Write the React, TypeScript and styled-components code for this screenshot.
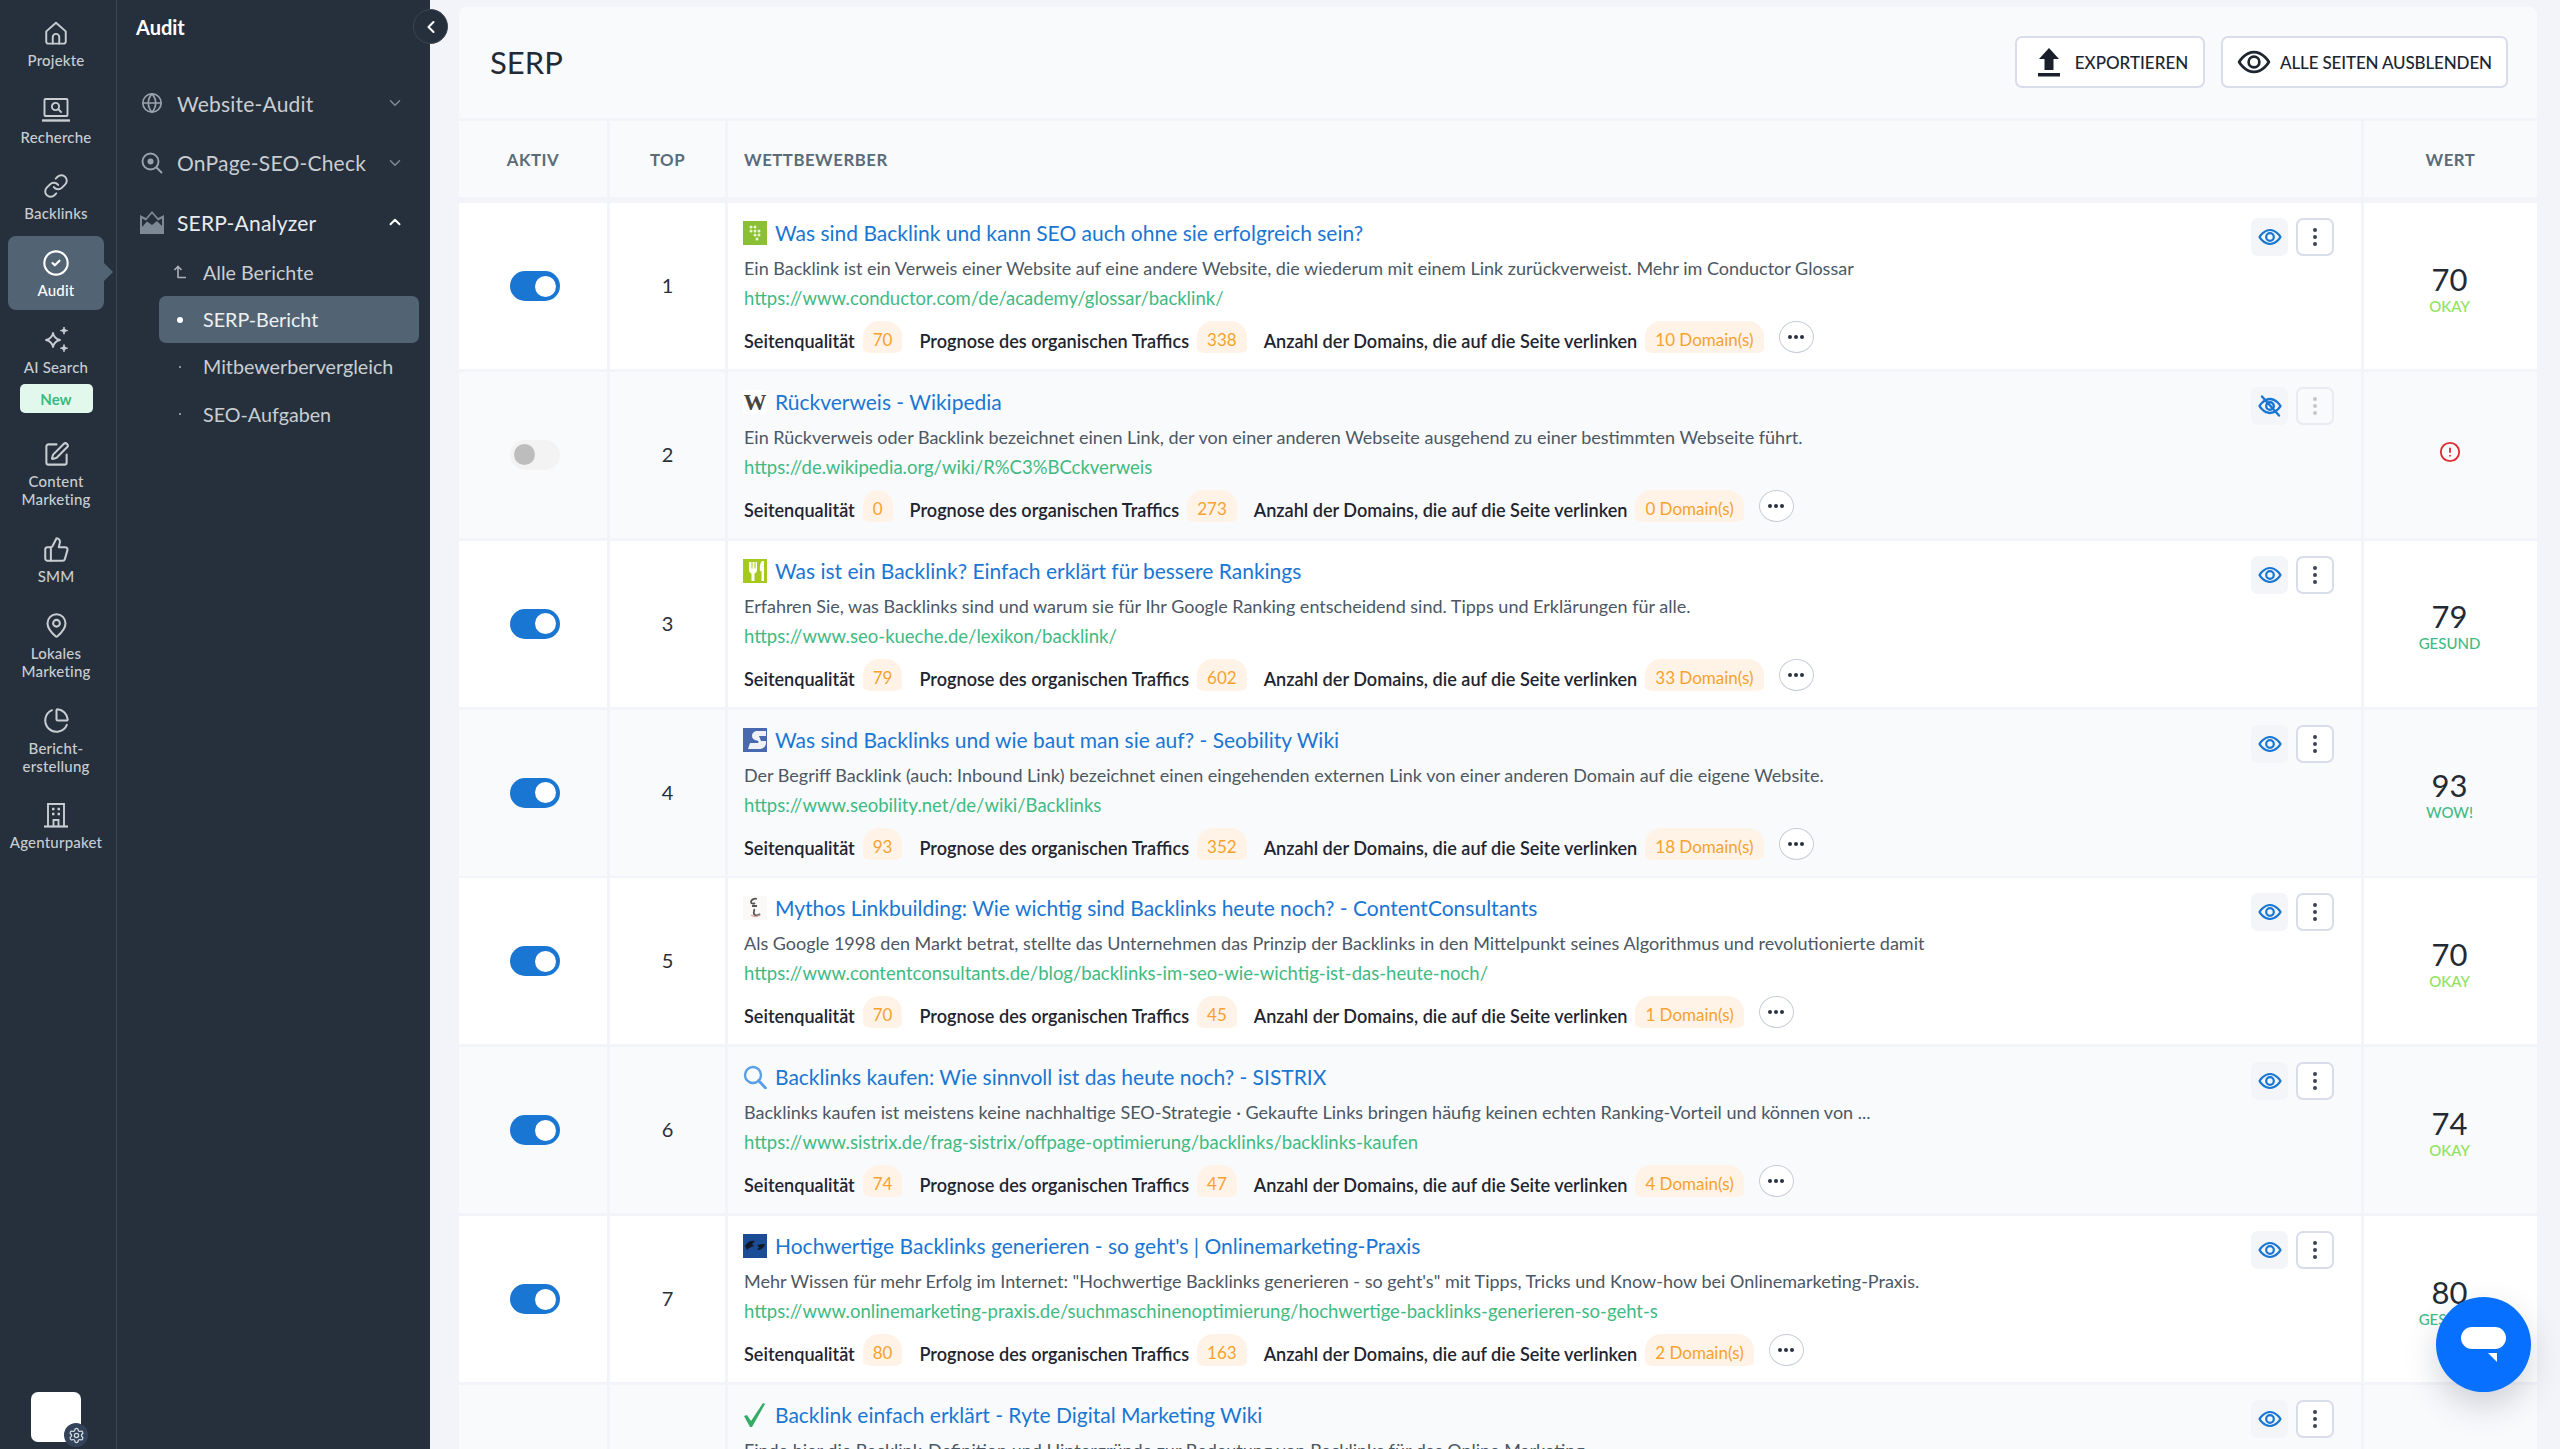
import styled, { createGlobalStyle } from "styled-components";
import {
  ChartPie,
  ChevronDown,
  ChevronLeft,
  ChevronUp,
  CircleAlert,
  CircleCheck,
  Globe,
  Link,
  MapPin,
  Settings,
  SquarePen,
  ThumbsUp,
} from "lucide-react";
import type { ReactNode } from "react";

const GlobalStyle = createGlobalStyle`
  html, body {
    margin: 0;
    height: 100%;
    overflow: hidden;
    font-family: "Lato", "Liberation Sans", sans-serif;
    background: #f3f4f9;
  }
  #root { height: 100%; }
  * { box-sizing: border-box; }
`;

const Page = styled.div`
  display: flex;
  height: 1449px;
  overflow: hidden;
`;

const Rail = styled.nav`
  position: relative;
  width: 117px;
  flex: none;
  display: flex;
  flex-direction: column;
  gap: 2.7px;
  padding-top: 6px;
  background: #25303c;
  border-right: 1px solid #3b4652;
`;

const RailItem = styled.a<{ $active?: boolean }>`
  position: relative;
  width: 96px;
  margin-left: 8px;
  padding: 15px 0 11px;
  display: flex;
  flex-direction: column;
  align-items: center;
  gap: 6px;
  border-radius: 8px;
  color: ${(p) => (p.$active ? "#fff" : "#c9cdd2")};
  background: ${(p) => (p.$active ? "#526473" : "transparent")};
  ${(p) =>
    p.$active &&
    `&::after {
      content: "";
      position: absolute;
      right: -9px;
      top: 27px;
      border-left: 9px solid #526473;
      border-top: 9px solid transparent;
      border-bottom: 9px solid transparent;
    }`}
`;

const RailIcon = styled.span`
  height: 24px;
  display: flex;
  align-items: center;
  justify-content: center;
  svg { display: block; flex: none; }
`;

const RailLabel = styled.span`
  font-size: 15px;
  line-height: 18px;
  font-weight: 500;
  text-align: center;
  white-space: pre-line;
  letter-spacing: 0.2px;
`;

const NewBadge = styled.span`
  width: 73px;
  height: 29px;
  margin: 2px 0 1px;
  border-radius: 5px;
  background: #e3f8ed;
  color: #37bb80;
  font-size: 15px;
  font-weight: 700;
  line-height: 31px;
  text-align: center;
`;

const Tile = styled.div`
  position: absolute;
  left: 31px;
  bottom: 7px;
  width: 50px;
  height: 50px;
  border-radius: 7px;
  background: #fff;
`;

const GearBadge = styled.span`
  position: absolute;
  right: -7px;
  bottom: -5px;
  width: 24px;
  height: 24px;
  border-radius: 50%;
  background: #33435a;
  color: #d7dbe2;
  display: flex;
  align-items: center;
  justify-content: center;
`;

const SubNav = styled.aside`
  position: relative;
  width: 313px;
  flex: none;
  background: #25303c;
  color: #c9cdd2;
  padding: 0 11px 0 19px;
`;

const SubTitle = styled.h2`
  margin: 0;
  height: 54px;
  font-size: 20px;
  line-height: 55px;
  font-weight: 700;
  color: #fff;
`;

const Collapse = styled.button`
  position: absolute;
  top: 9px;
  right: -18px;
  width: 35px;
  height: 35px;
  padding: 0;
  border-radius: 50%;
  border: 1px solid #3b4652;
  background: #25303c;
  color: #fff;
  display: flex;
  align-items: center;
  justify-content: center;
  z-index: 2;
`;

const GroupList = styled.div`
  padding-top: 19.5px;
`;

const Group = styled.div<{ $open?: boolean }>`
  display: flex;
  align-items: center;
  height: 59.5px;
  margin-left: -7px;
  font-size: 21px;
  letter-spacing: 0.2px;
  color: ${(p) => (p.$open ? "#e9ebee" : "#c9cdd2")};
`;

const GroupIcon = styled.span`
  width: 24px;
  margin-right: 13px;
  margin-left: 11px;
  display: flex;
  justify-content: center;
  flex: none;
`;

const GroupName = styled.span`
  flex: 1;
`;

const GroupChevron = styled.span`
  margin-right: 15px;
  display: flex;
`;

const SubList = styled.div`
  margin-top: -3.5px;
`;

const SubItem = styled.div<{ $active?: boolean }>`
  display: flex;
  align-items: center;
  height: 47.4px;
  margin-left: 23px;
  border-radius: 7px;
  font-size: 19.7px;
  background: ${(p) => (p.$active ? "#526473" : "transparent")};
  color: ${(p) => (p.$active ? "#eef0f2" : "#c9cdd2")};
`;

const SubMark = styled.span`
  width: 42px;
  margin-right: 2px;
  flex: none;
  display: flex;
  justify-content: center;
`;

const Dot = styled.i<{ $big?: boolean }>`
  display: block;
  width: ${(p) => (p.$big ? 6 : 2)}px;
  height: ${(p) => (p.$big ? 6 : 2)}px;
  border-radius: 50%;
  background: ${(p) => (p.$big ? "#fff" : "#aab0b8")};
`;

const Main = styled.main`
  flex: 1;
  min-width: 0;
  padding: 7px 23px 0 29px;
  overflow: hidden;
  background: #f3f4f9;
`;

const TopBar = styled.header`
  height: 111px;
  padding: 28px 29px 0 31px;
  display: flex;
  justify-content: space-between;
  align-items: flex-start;
  background: #f9fafc;
  border-radius: 8px 8px 0 0;
`;

const Heading = styled.h1`
  margin: 0;
  font-size: 31px;
  line-height: 54px;
  font-weight: 400;
  color: #222a35;
`;

const Buttons = styled.div`
  display: flex;
  gap: 16px;
  margin-top: 1px;
`;

const OutlineButton = styled.button<{ $w: number; $gap: number; $shift?: number }>`
  width: ${(p) => p.$w}px;
  height: 52px;
  padding: 0 0 0 ${(p) => p.$shift ?? 0}px;
  display: flex;
  align-items: center;
  justify-content: center;
  gap: ${(p) => p.$gap}px;
  background: #fff;
  border: 2px solid #d9dcea;
  border-radius: 7px;
  font-family: inherit;
  font-size: 17px;
  font-weight: 500;
  color: #1d2530;
  text-transform: uppercase;
  letter-spacing: ${(p) => (p.$w > 200 ? "-0.15px" : "0")};
`;

const Grid = styled.div`
  display: grid;
  grid-template-columns: 148px 115px 1fr 173px;
  column-gap: 3px;
`;

const HeadRow = styled(Grid)`
  margin-top: 3px;
  margin-bottom: 6px;
`;

const HeadCell = styled.div<{ $left?: boolean }>`
  height: 76px;
  display: flex;
  align-items: center;
  justify-content: ${(p) => (p.$left ? "flex-start" : "center")};
  padding-left: ${(p) => (p.$left ? "16px" : "0")};
  background: #f9fafc;
  color: #5b6b78;
  font-size: 16.8px;
  font-weight: 700;
  letter-spacing: 0.5px;
  text-transform: uppercase;
`;

const BodyRow = styled(Grid)`
  margin-bottom: 2.85px;
`;

const Cell = styled.div<{ $alt?: boolean }>`
  height: 166px;
  display: flex;
  flex-direction: column;
  align-items: center;
  justify-content: center;
  background: ${(p) => (p.$alt ? "#f9fafc" : "#fff")};
`;

const ScoreCell = styled(Cell)`
  padding-right: 2px;
`;

const Toggle = styled.span<{ $on: boolean }>`
  width: 50px;
  height: 30px;
  margin-right: -3px;
  padding: 0 4px;
  display: flex;
  align-items: center;
  justify-content: ${(p) => (p.$on ? "flex-end" : "flex-start")};
  border-radius: 15px;
  background: ${(p) => (p.$on ? "#1976d2" : "#f3f3f4")};
  &::before {
    content: "";
    width: 21px;
    height: 21px;
    border-radius: 50%;
    background: ${(p) => (p.$on ? "#fff" : "#bdbdbd")};
  }
`;

const Rank = styled.span`
  font-size: 20px;
  color: #2a3039;
  margin-top: -2px;
`;

const Competitor = styled(Cell)`
  flex-direction: row;
  align-items: flex-start;
  justify-content: space-between;
  padding: 18px 27px 0 16px;
`;

const Info = styled.div`
  min-width: 0;
`;

const TitleLine = styled.div`
  display: flex;
  align-items: center;
  gap: 8px;
  height: 28px;
  margin-top: -2px;
  margin-bottom: 2px;
  margin-left: -1px;
`;

const Title = styled.a`
  font-size: 21px;
  line-height: 28px;
  color: #1976d2;
  white-space: nowrap;
`;

const Desc = styled.p`
  margin: 9px 0 0;
  font-size: 18px;
  line-height: 24px;
  color: #4b5763;
  white-space: nowrap;
`;

const Url = styled.a`
  display: block;
  margin-top: 6px;
  font-size: 18.5px;
  line-height: 24px;
  color: #3fba82;
  white-space: nowrap;
`;

const Metrics = styled.div`
  display: flex;
  align-items: flex-start;
  margin-top: 11px;
`;

const MetricLabel = styled.span`
  font-size: 18.1px;
  line-height: 40px;
  font-weight: 600;
  color: #1f2530;
  margin-right: 8px;
  white-space: nowrap;
`;

const MetricBadge = styled.span`
  height: 32px;
  padding: 4px 10px 0;
  margin-right: 17px;
  border-radius: 16px 16px 9px 9px / 16px 16px 4px 4px;
  background: #fff3e7;
  color: #f7a22f;
  font-size: 17px;
  line-height: 30px;
  white-space: nowrap;
`;

const MoreButton = styled.button`
  width: 35px;
  height: 32px;
  padding: 0;
  margin-left: -2px;
  border-radius: 50%;
  border: 1px solid #c6cbd6;
  background: #fff;
  display: flex;
  align-items: center;
  justify-content: center;
  gap: 2px;
  i {
    display: block;
    width: 4px;
    height: 4px;
    border-radius: 50%;
    background: #2a3140;
  }
`;

const Actions = styled.div`
  display: flex;
  gap: 8px;
  margin-top: -3px;
  flex: none;
`;

const EyeBox = styled.span`
  width: 37px;
  height: 38px;
  border-radius: 7px;
  background: #f3f5f9;
  color: #1976d2;
  display: flex;
  align-items: center;
  justify-content: center;
`;

const KebabBox = styled.span<{ $off?: boolean }>`
  width: 38px;
  height: 38px;
  border-radius: 7px;
  border: 2px solid ${(p) => (p.$off ? "#e8ebf2" : "#d9dcea")};
  background: ${(p) => (p.$off ? "#f9fafc" : "#fff")};
  display: flex;
  flex-direction: column;
  align-items: center;
  justify-content: center;
  gap: 3px;
  i {
    display: block;
    width: 4px;
    height: 4px;
    border-radius: 50%;
    background: ${(p) => (p.$off ? "#c4c6ca" : "#3b4355")};
  }
`;

const Score = styled.span`
  font-size: 31px;
  line-height: 36px;
  color: #232a34;
  margin-top: 3px;
`;

const Verdict = styled.span<{ $color: string }>`
  font-size: 15px;
  line-height: 18px;
  font-weight: 500;
  color: ${(p) => p.$color};
`;

const Chat = styled.button`
  position: fixed;
  left: 2436px;
  top: 1297px;
  width: 95px;
  height: 95px;
  padding: 0;
  border: none;
  border-radius: 50%;
  background: #0770ff;
  box-shadow: 0 14px 32px rgba(60, 70, 90, 0.22);
  display: flex;
  align-items: center;
  justify-content: center;
`;

const FavWrap = styled.span`
  width: 24px;
  height: 24px;
  flex: none;
  display: block;
`;

const WikiMark = styled.span`
  width: 24px;
  height: 24px;
  flex: none;
  border-radius: 4px;
  background: #fff;
  color: #444;
  font-family: "Liberation Serif", serif;
  font-size: 23px;
  font-weight: 700;
  line-height: 25px;
  text-align: center;
`;

const HomeIcon = () => (
  <svg width="26" height="26" viewBox="0 0 24 24" fill="none" stroke="currentColor" strokeWidth="1.8" strokeLinejoin="round" strokeLinecap="round">
    <path d="M3 10.5 12 2.5l9 8V20a1.8 1.8 0 0 1-1.8 1.8H4.8A1.8 1.8 0 0 1 3 20z" />
    <path d="M9 21.8v-6a3 3 0 0 1 6 0v6" />
  </svg>
);

const LaptopIcon = () => (
  <svg width="28" height="26" viewBox="0 0 28 26" fill="none" stroke="currentColor" strokeWidth="1.9">
    <rect x="2.5" y="2" width="23" height="17" rx="1" />
    <circle cx="13.5" cy="9.5" r="3.6" />
    <path d="m16.2 12.2 2.8 2.8" strokeLinecap="round" />
    <path d="M0 23.5h28" strokeWidth="2.4" />
  </svg>
);

const SparkIcon = () => (
  <svg width="28" height="28" viewBox="0 0 28 28" fill="none" stroke="currentColor" strokeWidth="1.8" strokeLinejoin="round">
    <path d="M11 7c.8 4.2 2.6 6 7 7-4.4 1-6.2 2.8-7 7-.8-4.2-2.6-6-7-7 4.4-1 6.2-2.8 7-7z" />
    <path d="M22 1c.4 2.400 1.200 3.200 3.600 3.600C23.200 5 22.400 5.800 22 8.200 21.600 5.800 20.800 5 18.400 4.600 20.800 4.200 21.600 3.400 22 1z" fill="currentColor" strokeWidth="1" />
    <path d="M22 18.600c.4 2.400 1.200 3.200 3.600 3.600-2.400.4-3.200 1.200-3.600 3.600-.4-2.400-1.200-3.200-3.600-3.600 2.400-.4 3.200-1.200 3.600-3.600z" fill="currentColor" strokeWidth="1" />
  </svg>
);

const BuildingIcon = () => (
  <svg width="26" height="26" viewBox="0 0 26 26" fill="none" stroke="currentColor" strokeWidth="1.9">
    <path d="M5 24V2h16v22" />
    <path d="M1 24.500h24" strokeWidth="2.200" />
    <path d="M10.500 24v-6h5v6" />
    <path d="M9 7h2.500M14.500 7H17M9 12h2.500M14.500 12H17" strokeWidth="2.400" />
  </svg>
);

const SeoCheckIcon = () => (
  <svg width="22" height="22" viewBox="0 0 22 22" fill="none" stroke="#9aa3ad" strokeWidth="1.900">
    <circle cx="9.500" cy="9.500" r="8" />
    <circle cx="9.500" cy="9.500" r="3" fill="#9aa3ad" stroke="none" />
    <path d="m15.500 15.500 5 5" strokeLinecap="round" />
  </svg>
);

const SerpIcon = () => (
  <svg width="24" height="23" viewBox="0 0 24 23" fill="#7d8994">
    <path d="M0 4l6 3 6-7 6 7 6-3v19H0zM2 7.500v8.500l5-5.500 5 3.500 5-4 5 5V7.500l-4 2-6-7-6 7z" fillRule="evenodd" />
  </svg>
);

const BackUpIcon = () => (
  <svg width="14" height="16" viewBox="0 0 14 16" fill="none" stroke="#aab0b8" strokeWidth="1.600">
    <path d="M5 14V3M1.500 6 5 2.500 8.500 6M5 13.500h8" />
  </svg>
);

const EyeIcon = ({ size = 24, width = 2.2 }: { size?: number; width?: number }) => (
  <svg width={size} height={size} viewBox="0 0 24 24" fill="none" stroke="currentColor" strokeWidth={width}>
    <path d="M1.500 12S5.500 5 12 5s10.500 7 10.500 7-4 7-10.500 7S1.500 12 1.500 12z" strokeLinejoin="round" />
    <circle cx="12" cy="12" r="3.800" />
  </svg>
);

const EyeOffIcon = () => (
  <svg width="24" height="24" viewBox="0 0 24 24" fill="none" stroke="currentColor" strokeWidth="2.400">
    <path d="M1.500 12S5.500 5 12 5s10.500 7 10.500 7-4 7-10.500 7S1.500 12 1.500 12z" strokeLinejoin="round" />
    <circle cx="12" cy="12" r="3.800" />
    <path d="M4 2.500 21 21.500" strokeLinecap="round" />
  </svg>
);

const UploadIcon = () => (
  <svg width="22" height="29" viewBox="0 0 22 29" fill="#1a202b">
    <path d="M11 0 21 11h-5.500v11h-9V11H1z" />
    <rect x="0" y="25" width="22" height="3.500" />
  </svg>
);

const ChatBubble = () => (
  <svg width="46" height="36" viewBox="0 0 46 36" fill="#fff">
    <rect width="45" height="22" rx="11" />
    <path d="M27 26h9v9z" />
  </svg>
);

const Favicon = ({ kind }: { kind: string }) => {
  if (kind === "wiki") return <WikiMark>W</WikiMark>;
  const art: Record<string, ReactNode> = {
    conductor: (
      <>
        <rect width="24" height="24" fill="#8cc034" />
        <g fill="#e9f5d0">
          <circle cx="8" cy="6" r="1.500" /><circle cx="12" cy="6" r="1.500" />
          <circle cx="8" cy="10" r="1.500" /><circle cx="12" cy="10" r="1.500" /><circle cx="16" cy="10" r="1.500" />
          <circle cx="12" cy="14" r="1.500" /><circle cx="16" cy="14" r="1.500" />
          <circle cx="14" cy="18" r="1.500" />
        </g>
      </>
    ),
    kueche: (
      <>
        <rect width="24" height="24" fill="#a5c91f" />
        <path d="M6 3v8c0 2 1 3 2.500 3.500V22h3v-7.500C13 14 14 13 14 11V3h-1.500v6.500h-1V3h-2v6.500h-1V3z" fill="#fff" />
        <path d="M19 2c-2 2-2.500 6-2 10h1.500v10H21V2z" fill="#fff" />
      </>
    ),
    seobility: (
      <>
        <rect width="24" height="24" fill="#4868b0" />
        <path d="M23 3h-8c-4 0-6 2-6 5 0 2.500 2 4 5 4.500 2 .4 2 2.500 0 2.500H7l-2 6h11c5 0 7-3 7-6z" fill="#eef1f7" />
        <path d="M16 8h7v5h-5z" fill="#4868b0" />
      </>
    ),
    consultants: (
      <>
        <rect width="24" height="24" fill="#fbf9f7" />
        <path d="M14 3c-3-1-6 1-6 3s3 2 4 1M9 10h5M11 13c1 2-1 3 0 5s4 2 6 0" fill="none" stroke="#555" strokeWidth="1.800" />
        <path d="M8 19c3 2 6 2 9 0" fill="none" stroke="#d9a6a0" strokeWidth="1.500" />
      </>
    ),
    sistrix: (
      <>
        <circle cx="10" cy="10" r="8" fill="none" stroke="#5b9ee8" strokeWidth="2.400" />
        <path d="m15.500 15.500 7 7.500" stroke="#5b9ee8" strokeWidth="2.800" strokeLinecap="round" />
      </>
    ),
    praxis: (
      <>
        <rect width="24" height="24" fill="#1c4c96" />
        <path d="M2 12c2-4 6-6 10-5l-3 3 2 2-5 2-2 2zM22 10c-1 4-4 6-8 6l2-3-2-2 6-1z" fill="#101a26" />
      </>
    ),
    ryte: <path d="M1 13l3-1 4 6L20 0l2 1L9 24H7z" fill="#35ab66" />,
  };
  return (
    <FavWrap>
      <svg width="24" height="24" viewBox="0 0 24 24">{art[kind]}</svg>
    </FavWrap>
  );
};

const railItems: { icon: ReactNode; label: string; active?: boolean; badge?: boolean }[] = [
  { icon: <HomeIcon />, label: "Projekte" },
  { icon: <LaptopIcon />, label: "Recherche" },
  { icon: <Link size={26} strokeWidth={1.8} />, label: "Backlinks" },
  { icon: <CircleCheck size={28} strokeWidth={1.8} />, label: "Audit", active: true },
  { icon: <SparkIcon />, label: "AI Search", badge: true },
  { icon: <SquarePen size={27} strokeWidth={1.8} />, label: "Content\nMarketing" },
  { icon: <ThumbsUp size={27} strokeWidth={1.8} />, label: "SMM" },
  { icon: <MapPin size={27} strokeWidth={1.8} />, label: "Lokales\nMarketing" },
  { icon: <ChartPie size={27} strokeWidth={1.8} />, label: "Bericht-\nerstellung" },
  { icon: <BuildingIcon />, label: "Agenturpaket" },
];

type Row = {
  fav: string;
  title: string;
  desc: string;
  url: string;
  quality: string;
  traffic: string;
  domains: string;
  score?: string;
  verdict?: string;
  color?: string;
  off?: boolean;
};

const green = "#3fbb85";
const lime = "#8fe35c";

const rows: Row[] = [
  {
    fav: "conductor",
    title: "Was sind Backlink und kann SEO auch ohne sie erfolgreich sein?",
    desc: "Ein Backlink ist ein Verweis einer Website auf eine andere Website, die wiederum mit einem Link zurückverweist. Mehr im Conductor Glossar",
    url: "https://www.conductor.com/de/academy/glossar/backlink/",
    quality: "70",
    traffic: "338",
    domains: "10 Domain(s)",
    score: "70",
    verdict: "OKAY",
    color: lime,
  },
  {
    fav: "wiki",
    title: "Rückverweis - Wikipedia",
    desc: "Ein Rückverweis oder Backlink bezeichnet einen Link, der von einer anderen Webseite ausgehend zu einer bestimmten Webseite führt.",
    url: "https://de.wikipedia.org/wiki/R%C3%BCckverweis",
    quality: "0",
    traffic: "273",
    domains: "0 Domain(s)",
    off: true,
  },
  {
    fav: "kueche",
    title: "Was ist ein Backlink? Einfach erklärt für bessere Rankings",
    desc: "Erfahren Sie, was Backlinks sind und warum sie für Ihr Google Ranking entscheidend sind. Tipps und Erklärungen für alle.",
    url: "https://www.seo-kueche.de/lexikon/backlink/",
    quality: "79",
    traffic: "602",
    domains: "33 Domain(s)",
    score: "79",
    verdict: "GESUND",
    color: green,
  },
  {
    fav: "seobility",
    title: "Was sind Backlinks und wie baut man sie auf? - Seobility Wiki",
    desc: "Der Begriff Backlink (auch: Inbound Link) bezeichnet einen eingehenden externen Link von einer anderen Domain auf die eigene Website.",
    url: "https://www.seobility.net/de/wiki/Backlinks",
    quality: "93",
    traffic: "352",
    domains: "18 Domain(s)",
    score: "93",
    verdict: "WOW!",
    color: green,
  },
  {
    fav: "consultants",
    title: "Mythos Linkbuilding: Wie wichtig sind Backlinks heute noch? - ContentConsultants",
    desc: "Als Google 1998 den Markt betrat, stellte das Unternehmen das Prinzip der Backlinks in den Mittelpunkt seines Algorithmus und revolutionierte damit",
    url: "https://www.contentconsultants.de/blog/backlinks-im-seo-wie-wichtig-ist-das-heute-noch/",
    quality: "70",
    traffic: "45",
    domains: "1 Domain(s)",
    score: "70",
    verdict: "OKAY",
    color: lime,
  },
  {
    fav: "sistrix",
    title: "Backlinks kaufen: Wie sinnvoll ist das heute noch? - SISTRIX",
    desc: "Backlinks kaufen ist meistens keine nachhaltige SEO-Strategie · Gekaufte Links bringen häufig keinen echten Ranking-Vorteil und können von ...",
    url: "https://www.sistrix.de/frag-sistrix/offpage-optimierung/backlinks/backlinks-kaufen",
    quality: "74",
    traffic: "47",
    domains: "4 Domain(s)",
    score: "74",
    verdict: "OKAY",
    color: lime,
  },
  {
    fav: "praxis",
    title: "Hochwertige Backlinks generieren - so geht's | Onlinemarketing-Praxis",
    desc: 'Mehr Wissen für mehr Erfolg im Internet: "Hochwertige Backlinks generieren - so geht\'s" mit Tipps, Tricks und Know-how bei Onlinemarketing-Praxis.',
    url: "https://www.onlinemarketing-praxis.de/suchmaschinenoptimierung/hochwertige-backlinks-generieren-so-geht-s",
    quality: "80",
    traffic: "163",
    domains: "2 Domain(s)",
    score: "80",
    verdict: "GESUND",
    color: green,
  },
  {
    fav: "ryte",
    title: "Backlink einfach erklärt - Ryte Digital Marketing Wiki",
    desc: "Finde hier die Backlink-Definition und Hintergründe zur Bedeutung von Backlinks für das Online Marketing.",
    url: "",
    quality: "",
    traffic: "",
    domains: "",
  },
];

const subItems = [
  { label: "Alle Berichte", mark: <BackUpIcon /> },
  { label: "SERP-Bericht", mark: <Dot $big />, active: true },
  { label: "Mitbewerbervergleich", mark: <Dot /> },
  { label: "SEO-Aufgaben", mark: <Dot /> },
];

export default function App() {
  return (
    <Page>
      <GlobalStyle />
      <Rail>
        {railItems.map((item) => (
          <RailItem key={item.label} $active={item.active}>
            <RailIcon>{item.icon}</RailIcon>
            <RailLabel>{item.label}</RailLabel>
            {item.badge && <NewBadge>New</NewBadge>}
          </RailItem>
        ))}
        <Tile>
          <GearBadge>
            <Settings size={17} strokeWidth={1.8} />
          </GearBadge>
        </Tile>
      </Rail>

      <SubNav>
        <SubTitle>Audit</SubTitle>
        <Collapse>
          <ChevronLeft size={20} strokeWidth={2.5} />
        </Collapse>
        <GroupList>
          <Group>
            <GroupIcon><Globe size={22} color="#9aa3ad" strokeWidth={1.8} /></GroupIcon>
            <GroupName>Website-Audit</GroupName>
            <GroupChevron><ChevronDown size={18} color="#7f8a95" /></GroupChevron>
          </Group>
          <Group>
            <GroupIcon><SeoCheckIcon /></GroupIcon>
            <GroupName>OnPage-SEO-Check</GroupName>
            <GroupChevron><ChevronDown size={18} color="#7f8a95" /></GroupChevron>
          </Group>
          <Group $open>
            <GroupIcon><SerpIcon /></GroupIcon>
            <GroupName>SERP-Analyzer</GroupName>
            <GroupChevron><ChevronUp size={18} color="#fff" strokeWidth={2.6} /></GroupChevron>
          </Group>
        </GroupList>
        <SubList>
          {subItems.map((item) => (
            <SubItem key={item.label} $active={item.active}>
              <SubMark>{item.mark}</SubMark>
              {item.label}
            </SubItem>
          ))}
        </SubList>
      </SubNav>

      <Main>
        <TopBar>
          <Heading>SERP</Heading>
          <Buttons>
            <OutlineButton $w={190} $gap={15} $shift={6}>
              <UploadIcon />
              Exportieren
            </OutlineButton>
            <OutlineButton $w={287} $gap={9}>
              <EyeIcon size={34} width={1.9} />
              Alle Seiten ausblenden
            </OutlineButton>
          </Buttons>
        </TopBar>

        <HeadRow>
          <HeadCell>Aktiv</HeadCell>
          <HeadCell>Top</HeadCell>
          <HeadCell $left>Wettbewerber</HeadCell>
          <HeadCell>Wert</HeadCell>
        </HeadRow>

        {rows.map((row, i) => {
          const alt = i % 2 === 1;
          return (
            <BodyRow key={row.title}>
              <Cell $alt={alt}>
                <Toggle $on={!row.off} />
              </Cell>
              <Cell $alt={alt}>
                <Rank>{i + 1}</Rank>
              </Cell>
              <Competitor $alt={alt}>
                <Info>
                  <TitleLine>
                    <Favicon kind={row.fav} />
                    <Title>{row.title}</Title>
                  </TitleLine>
                  <Desc>{row.desc}</Desc>
                  {row.url && (
                    <>
                      <Url>{row.url}</Url>
                      <Metrics>
                        <MetricLabel>Seitenqualität</MetricLabel>
                        <MetricBadge>{row.quality}</MetricBadge>
                        <MetricLabel>Prognose des organischen Traffics</MetricLabel>
                        <MetricBadge>{row.traffic}</MetricBadge>
                        <MetricLabel>Anzahl der Domains, die auf die Seite verlinken</MetricLabel>
                        <MetricBadge>{row.domains}</MetricBadge>
                        <MoreButton>
                          <i />
                          <i />
                          <i />
                        </MoreButton>
                      </Metrics>
                    </>
                  )}
                </Info>
                <Actions>
                  <EyeBox>{row.off ? <EyeOffIcon /> : <EyeIcon />}</EyeBox>
                  <KebabBox $off={row.off}>
                    <i />
                    <i />
                    <i />
                  </KebabBox>
                </Actions>
              </Competitor>
              <ScoreCell $alt={alt}>
                {row.off ? (
                  <CircleAlert size={22} color="#e02a32" strokeWidth={2} style={{ marginTop: -6 }} />
                ) : (
                  row.score && (
                    <>
                      <Score>{row.score}</Score>
                      <Verdict $color={row.color as string}>{row.verdict}</Verdict>
                    </>
                  )
                )}
              </ScoreCell>
            </BodyRow>
          );
        })}
      </Main>

      <Chat>
        <ChatBubble />
      </Chat>
    </Page>
  );
}
